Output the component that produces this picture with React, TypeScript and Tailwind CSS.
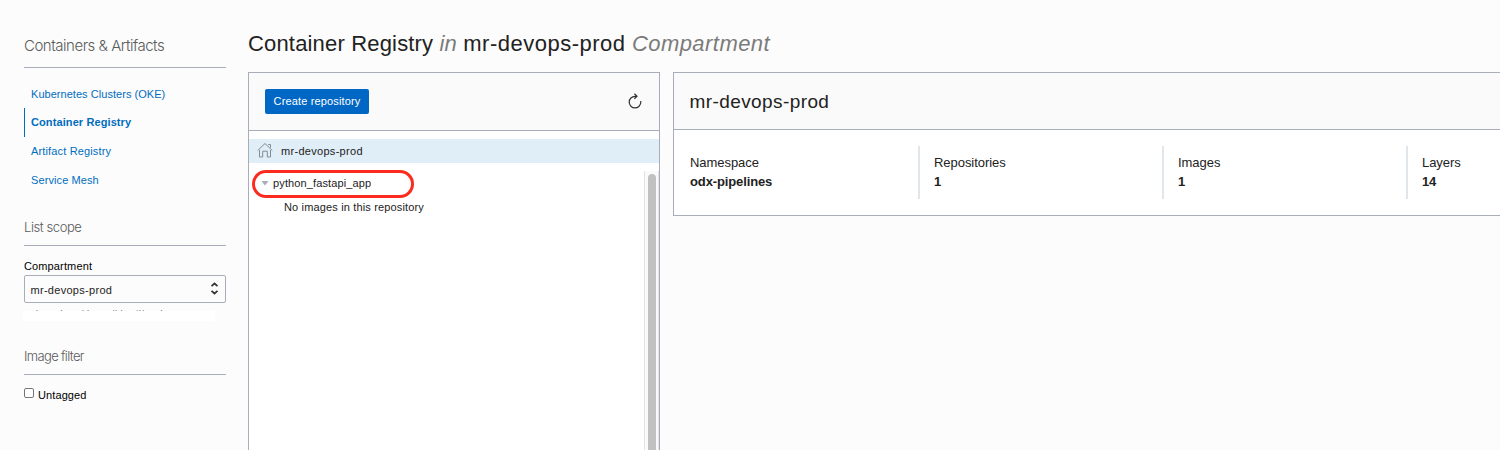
import React from 'react';

function SideHeading({ children, className }: { children: React.ReactNode; className: string }) {
  return <h2 className={`border-b border-[#a9adba] font-['Inter'] font-light text-[#5a5a5a] whitespace-nowrap ${className}`}>{children}</h2>;
}

function Sidebar() {
  return (
    <aside className="w-[202px] shrink-0 ml-6 pt-[34px]">
      <SideHeading className="h-[34px] text-[15px] leading-6 tracking-[-0.48px]">Containers &amp; Artifacts</SideHeading>
      <nav className="mt-3 text-[11px] text-[#006dbf] whitespace-nowrap">
        <a className="flex h-7 items-center pl-[7px] tracking-[0.04px]">Kubernetes Clusters (OKE)</a>
        <a className="flex h-[29px] items-center border-l border-[#006dbf] pl-[6px] font-bold tracking-[0.1px]">Container Registry</a>
        <a className="flex h-[29px] items-center pl-[7px] tracking-[0.15px]">Artifact Registry</a>
        <a className="flex h-[29px] items-center pl-[7px] tracking-[0.1px]">Service Mesh</a>
      </nav>
      <SideHeading className="mt-[22px] h-[29px] text-[13px] leading-5 tracking-[-0.42px]">List scope</SideHeading>
      <label className="mt-3 block h-[17px] text-[11px] leading-4 tracking-[0.13px] text-black">Compartment</label>
      <div className="flex h-7 items-center justify-between rounded-[2px] border border-[#a9adba] px-[6px] text-[11px] text-[#222]">
        <span className="-ml-[0.5px] pt-0.5 tracking-[0.29px]">mr-devops-prod</span>
        <svg width="9" height="14" viewBox="0 0 9 14" fill="none" stroke="#333" strokeWidth="1.7"><path d="M1.5 4.2 4.5 1.5 7.5 4.2M1.5 8.8 4.5 11.5 7.5 8.8" /></svg>
      </div>
      <div className="mt-[7px] h-[1px] overflow-hidden pl-[7px] text-[9px] leading-[6px] text-[#666] whitespace-nowrap">obsingdigmgldonewith(root)/mr-devops</div>
      <div className="-ml-px h-[10px] w-48 bg-white" />
      <SideHeading className="mt-[25px] h-[29px] text-[13px] leading-5 tracking-[-0.65px]">Image filter</SideHeading>
      <label className="mt-[12px] flex items-start text-[11px] leading-4 text-black">
        <span className="mt-[1px] h-[10px] w-[10px] rounded-[2px] border border-[#767676] bg-white" />
        <span className="ml-1 tracking-[0.1px]">Untagged</span>
      </label>
    </aside>
  );
}

function RepositoryPanel() {
  return (
    <section className="flex w-[412px] shrink-0 flex-col border border-b-0 border-[#a9adba] bg-white">
      <header className="flex h-[58px] shrink-0 items-center justify-between border-b border-[#a9adba] bg-[#fafafa] px-4">
        <button className="h-[25px] w-[104px] rounded-[2px] bg-[#0067c5] text-[11px] tracking-[0.15px] text-white whitespace-nowrap">Create repository</button>
        <svg className="mr-px mb-0.5" width="14" height="16" viewBox="0 0 14 16" fill="none" stroke="#333" strokeWidth="1.2"><path d="M8.8 3.3H7A5.8 5.8 0 1 0 12.8 9.1V8M6.4.8 9 3.3 6.4 5.8" /></svg>
      </header>
      <div className="mt-2 flex h-6 shrink-0 items-center bg-[#e0eef8] pl-2 text-[11px] text-[#222]">
        <svg className="mb-[3px]" width="16" height="16" viewBox="0 0 16 16" fill="none" stroke="#848b92" strokeWidth="1"><path d="M.7 8.5 8 1.5 15.3 8.5M11.3 2.5h2.2v3.2M2.5 8v7h3.2V9.2h4.6V15h3.2V8" /></svg>
        <span className="ml-2 tracking-[0.3px]">mr-devops-prod</span>
      </div>
      <div className="flex min-h-0 flex-1 pt-2">
        <div className="flex-1 text-[11px] text-[#222]">
          <div className="-mt-[1.5px] ml-[2.5px] flex h-[28px] w-[162px] items-center rounded-[14px] border-[3px] border-[#fb2b20] pb-px pl-[6.5px]">
            <svg width="8" height="5" viewBox="0 0 8 5"><path d="M.5 0h7L4 4.5z" fill="#a9adba" /></svg>
            <span className="ml-1 tracking-[0.13px]">python_fastapi_app</span>
          </div>
          <div className="ml-[35px] mt-[1.5px] leading-4 tracking-[0.15px]">No images in this repository</div>
        </div>
        <div className="w-[15px] border-x border-[#e3e3e3] bg-[#fafafa] pl-[3px] pt-[3px]">
          <div className="h-full w-2 rounded-t-full bg-[#c1c1c1]" />
        </div>
      </div>
    </section>
  );
}

const stats = [
  ['Namespace', 'odx-pipelines'],
  ['Repositories', '1'],
  ['Images', '1'],
  ['Layers', '14'],
];

function DetailsPanel() {
  return (
    <section className="ml-[13px] h-36 w-[1000px] shrink-0 border border-[#a9adba] bg-white">
      <h2 className="flex h-[57px] items-center border-b border-[#a9adba] bg-[#fafafa] pl-[15.5px] pt-0.5 text-[19px] tracking-[0.41px] text-[#222]">mr-devops-prod</h2>
      <div className="flex pt-4">
        {stats.map(([label, value]) => (
          <div key={label} className="h-[53px] w-[244px] shrink-0 border-l-2 border-[#e1e6eb] pl-[14px] pt-[7px] text-[13px] leading-[19px] tracking-[-0.05px] text-[#222] first:border-transparent">
            <div>{label}</div>
            <div className="font-bold tracking-[-0.12px]">{value}</div>
          </div>
        ))}
      </div>
    </section>
  );
}

export default function App() {
  return (
    <div className="flex h-[450px] w-full overflow-hidden bg-[#fcfcfc] font-['Liberation_Sans',sans-serif]">
      <Sidebar />
      <main className="ml-[22px] flex min-w-0 flex-1 flex-col">
        <h1 className="h-[72px] shrink-0 pt-[30px] text-[22px] leading-7 tracking-[0.17px] text-[#222] whitespace-nowrap">
          Container Registry <em className="text-[#7b7b7b]">in</em> <span className="tracking-[0.5px]">mr-devops-prod</span> <em className="tracking-[0.45px] text-[#7b7b7b]">Compartment</em>
        </h1>
        <div className="flex min-h-0 flex-1">
          <RepositoryPanel />
          <DetailsPanel />
        </div>
      </main>
    </div>
  );
}
